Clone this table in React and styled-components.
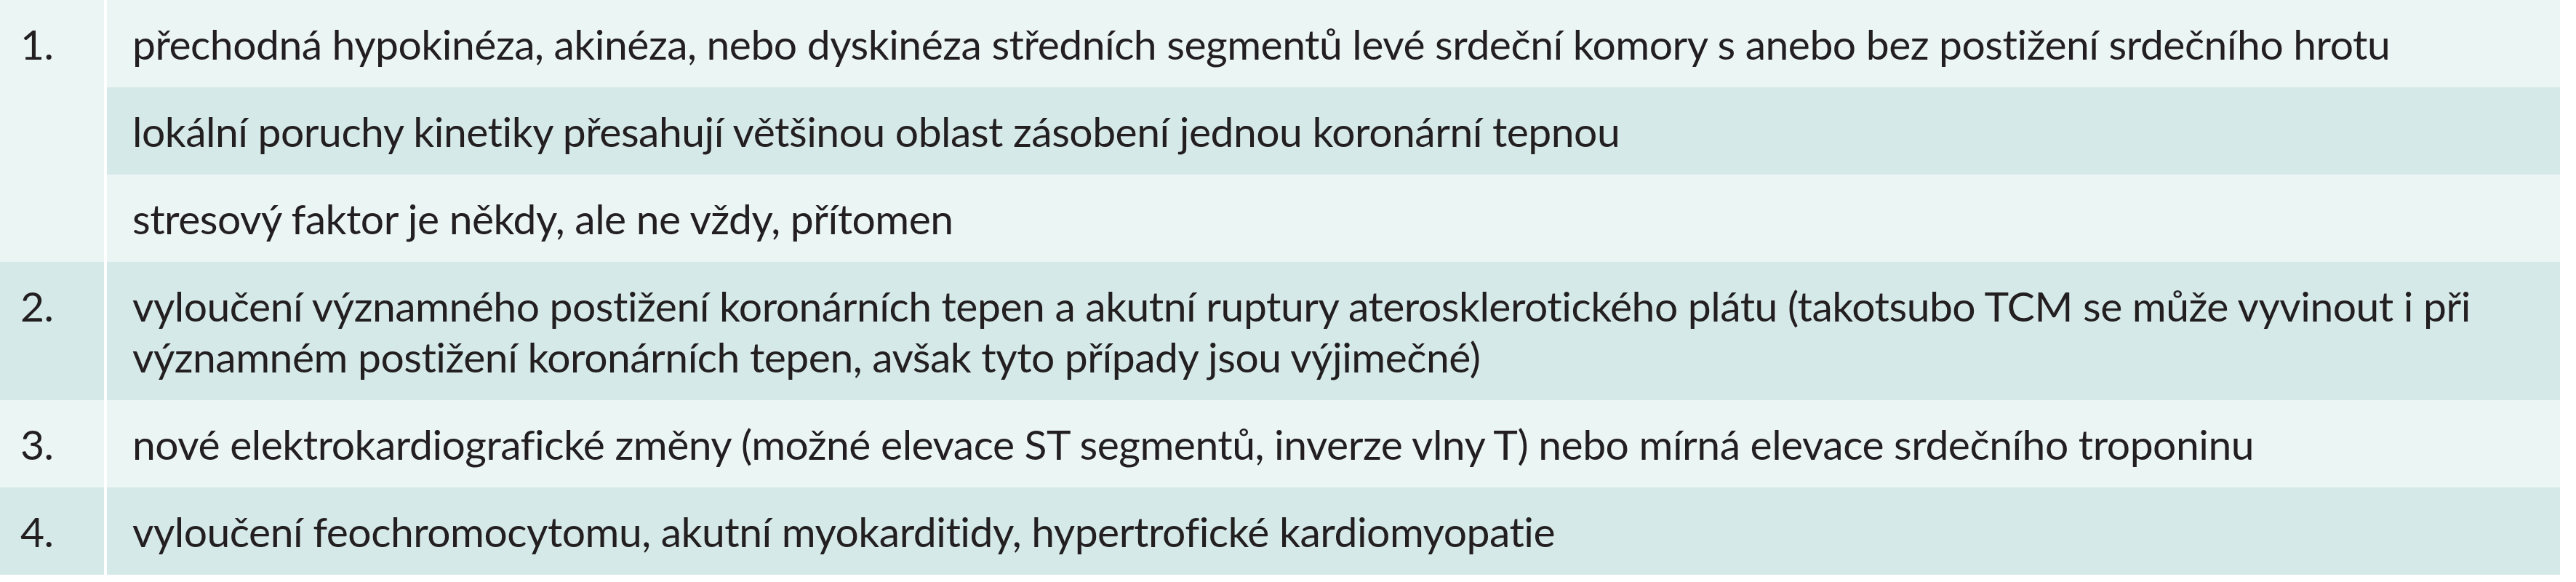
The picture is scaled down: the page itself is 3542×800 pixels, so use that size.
import React from 'react'
import styled, { createGlobalStyle } from 'styled-components'

const GlobalStyle = createGlobalStyle`
  html, body {
    margin: 0;
    padding: 0;
    background: #ffffff;
  }
  body {
    font-family: Lato, "Noto Sans", sans-serif;
  }
`

const Table = styled.div`
  display: grid;
  grid-template-columns: 143px 1fr;
  column-gap: 4px;
  width: 3520px;
  background: #ffffff;
  color: #231f20;
  font-family: Lato, "Noto Sans", sans-serif;
  font-size: 57px;
  line-height: 70px;
  letter-spacing: -0.5px;
`

const NumberCell = styled.div`
  grid-row: span ${({ $span }) => $span};
  padding: 25px 0 0 28px;
  background: ${({ $dark }) => ($dark ? '#d6e9e9' : '#ebf5f4')};
`

const TextCell = styled.div`
  grid-column: 2;
  padding: 25px 60px 25px 35px;
  background: ${({ $dark }) => ($dark ? '#d6e9e9' : '#ebf5f4')};
`

const criteria = [
  {
    num: '1.',
    items: [
      'přechodná hypokinéza, akinéza, nebo dyskinéza středních segmentů levé srdeční komory s anebo bez postižení srdečního hrotu',
      'lokální poruchy kinetiky přesahují většinou oblast zásobení jednou koronární tepnou',
      'stresový faktor je někdy, ale ne vždy, přítomen'
    ]
  },
  {
    num: '2.',
    items: [
      'vyloučení významného postižení koronárních tepen a akutní ruptury aterosklerotického plátu (takotsubo TCM se může vyvinout i při významném postižení koronárních tepen, avšak tyto případy jsou výjimečné)'
    ]
  },
  {
    num: '3.',
    items: [
      'nové elektrokardiografické změny (možné elevace ST segmentů, inverze vlny T) nebo mírná elevace srdečního troponinu'
    ]
  },
  {
    num: '4.',
    items: ['vyloučení feochromocytomu, akutní myokarditidy, hypertrofické kardiomyopatie']
  }
]

export default function App() {
  let rowIndex = 0

  return (
    <>
      <GlobalStyle />
      <Table>
        {criteria.map(group => {
          const groupDark = rowIndex % 2 === 1
          const cells = group.items.map((text, i) => {
            const dark = rowIndex % 2 === 1
            rowIndex++
            return (
              <TextCell key={group.num + i} $dark={dark}>
                {text}
              </TextCell>
            )
          })
          return (
            <React.Fragment key={group.num}>
              <NumberCell $span={group.items.length} $dark={groupDark}>
                {group.num}
              </NumberCell>
              {cells}
            </React.Fragment>
          )
        })}
      </Table>
    </>
  )
}
